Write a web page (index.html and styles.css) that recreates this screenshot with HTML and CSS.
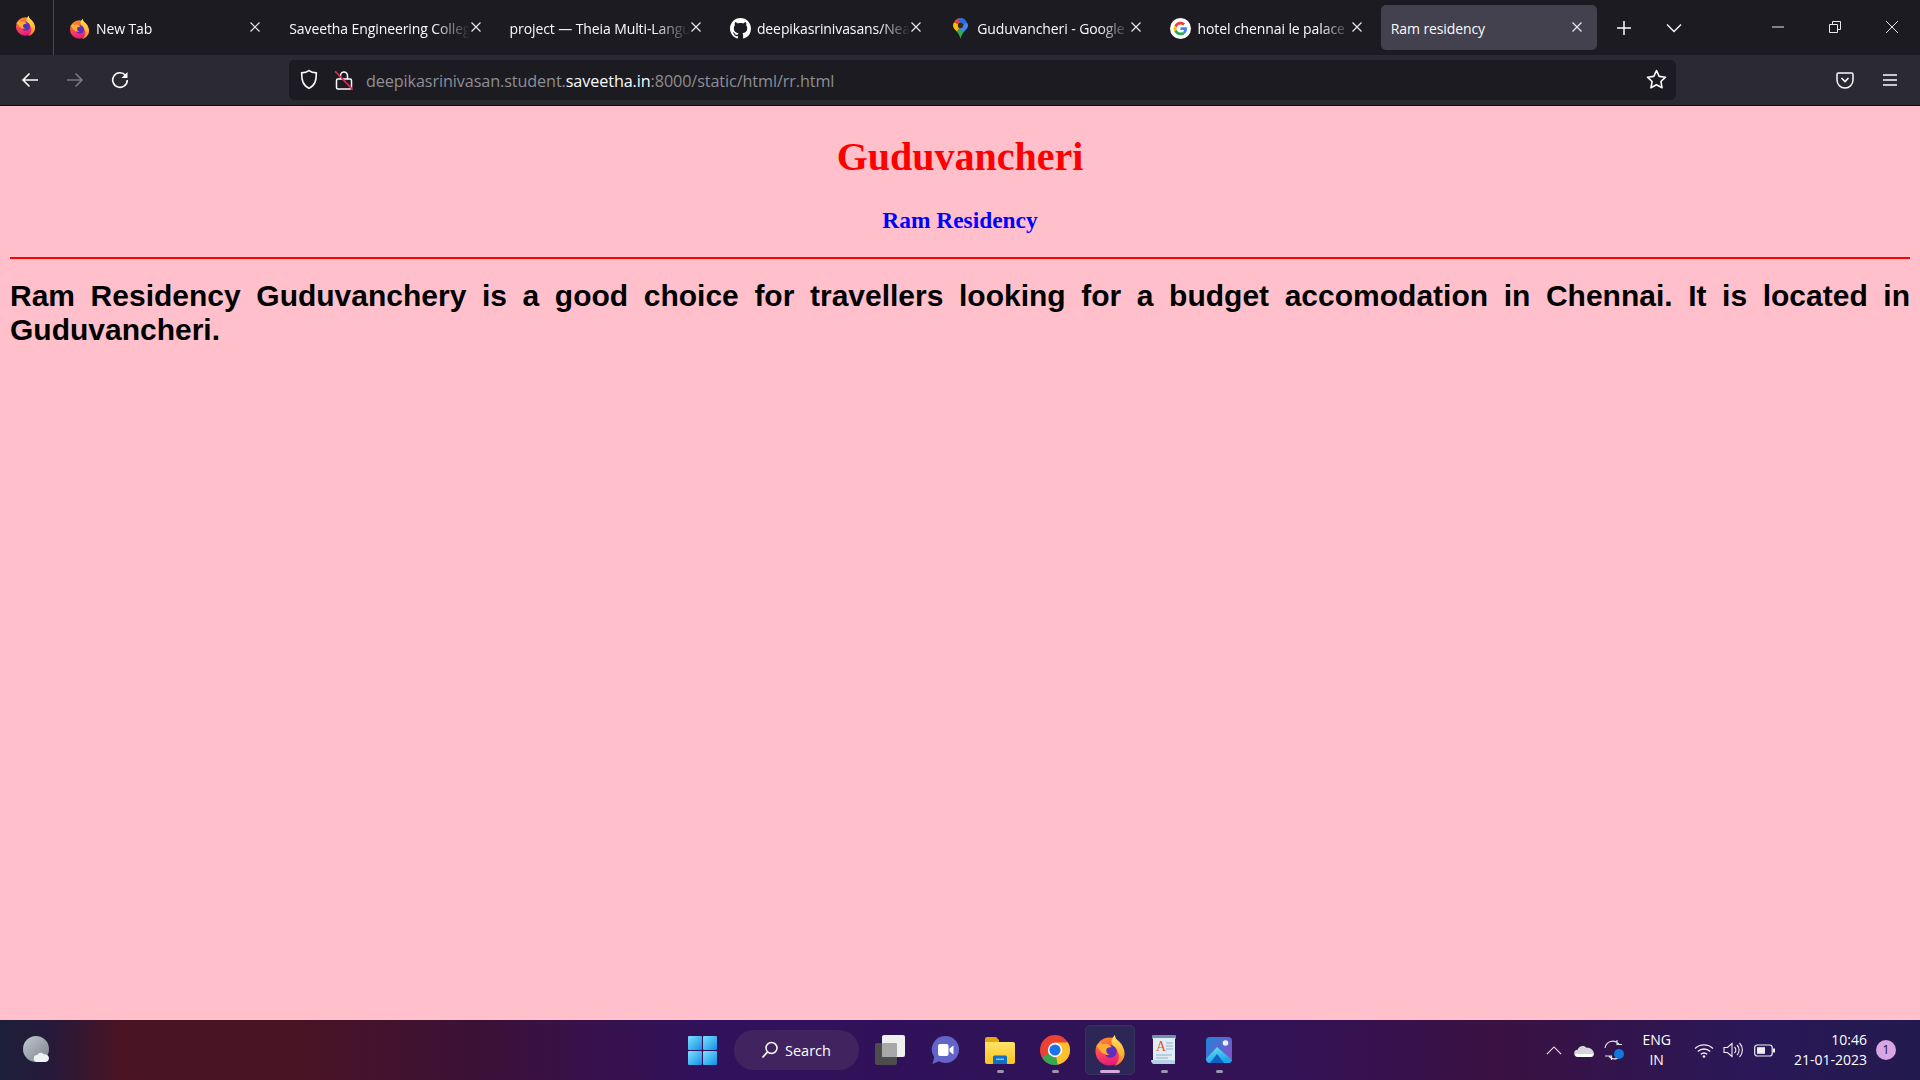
FILE: index.html
```html
<!DOCTYPE html>
<html lang="en">
<head>
<meta charset="utf-8">
<title>Ram residency</title>
<link rel="stylesheet" href="styles.css">
</head>
<body>
<svg class="defs" width="0" height="0" aria-hidden="true">
  <defs>
    <linearGradient id="fxBody" x1="0.3" y1="0" x2="0.5" y2="1">
      <stop offset="0" stop-color="#ff8a2b"/><stop offset="0.5" stop-color="#ff4a55"/><stop offset="1" stop-color="#e4177f"/>
    </linearGradient>
    <linearGradient id="fxFlame" x1="0" y1="0" x2="0" y2="1">
      <stop offset="0" stop-color="#ffe95c"/><stop offset="0.6" stop-color="#ffb52e"/><stop offset="1" stop-color="#ff6a2e"/>
    </linearGradient>
    <linearGradient id="winTile" x1="0" y1="0" x2="1" y2="1">
      <stop offset="0" stop-color="#7fe0ff"/><stop offset="1" stop-color="#0f8fe6"/>
    </linearGradient>
    <linearGradient id="folder" x1="0" y1="0" x2="0" y2="1">
      <stop offset="0" stop-color="#ffe36a"/><stop offset="1" stop-color="#fcc21c"/>
    </linearGradient>
    <linearGradient id="photo" x1="0" y1="0" x2="1" y2="0.6">
      <stop offset="0" stop-color="#1f86d8"/><stop offset="1" stop-color="#7a55c8"/>
    </linearGradient>
    <linearGradient id="peak" x1="0" y1="0" x2="0.4" y2="1">
      <stop offset="0" stop-color="#6fe0f5"/><stop offset="1" stop-color="#1aa6e8"/>
    </linearGradient>
    <linearGradient id="weather" x1="0" y1="0" x2="1" y2="1">
      <stop offset="0" stop-color="#c3c9cf"/><stop offset="1" stop-color="#77828c"/>
    </linearGradient>
    <symbol id="firefox" viewBox="0 0 32 32">
      <circle cx="15.500" cy="17.500" r="14" fill="url(#fxBody)"/>
      <path fill="url(#fxFlame)" d="M21 1c0 4 3 5.500 6 9 3 4 4.200 8 3.300 12-1 5-5.300 9-10.300 9.800 4-3 6-8 4.200-13C23 14.500 18.300 12 17.500 8.500 17 5.500 19 3 21 1z"/>
      <circle cx="16.500" cy="17.500" r="6.300" fill="#5a2fc2"/>
      <path fill="#ffae34" d="M1.800 13.500C3.200 10.500 5.500 8.500 8 8.300c-.6.700-.9 1.500-.8 2.300 2.800-1.300 6-1.100 8.300.5 1 .7 1.800 1.600 2 2.400-2.500-.6-4.800.6-5.200 2.500-.4 2.200 1.200 4.200 3.500 5-4 .5-8-1.500-10-4.800C4.500 14.800 3.800 13.600 3.600 12.400c-.7.300-1.300.7-1.800 1.100z"/>
    </symbol>
    <symbol id="github" viewBox="0 0 16 16">
      <path fill="#fff" d="M8 0C3.580 0 0 3.580 0 8c0 3.540 2.290 6.530 5.470 7.590.4.070.55-.17.55-.38 0-.19-.01-.82-.01-1.490-2.010.37-2.530-.49-2.690-.94-.09-.23-.48-.94-.82-1.130-.28-.15-.68-.52-.01-.53.63-.01 1.080.58 1.230.82.720 1.210 1.870.87 2.330.66.070-.52.280-.87.510-1.070-1.780-.2-3.640-.89-3.640-3.950 0-.87.310-1.590.820-2.150-.08-.2-.36-1.020.080-2.120 0 0 .67-.21 2.200.82.640-.18 1.320-.27 2-.27.680 0 1.360.090 2 .27 1.530-1.040 2.200-.82 2.200-.82.440 1.100.160 1.920.080 2.120.510.560.820 1.270.820 2.150 0 3.070-1.870 3.750-3.650 3.950.29.250.54.730.54 1.480 0 1.070-.01 1.930-.01 2.200 0 .21.150.46.550.38A8.013 8.013 0 0016 8c0-4.420-3.580-8-8-8z"/>
    </symbol>
    <symbol id="maps" viewBox="0 0 20 28">
      <path fill="#34a853" d="M5 18c2 3 4 5 5 10 1-5 3-7 5-10l-5-6z"/>
      <path fill="#fbbc04" d="M1.500 5.500C.6 6.800 0 8.300 0 10c0 3.200 2.500 5.500 5 8l7-8z"/>
      <path fill="#ea4335" d="M10 0C6.500 0 3.300 2 1.500 5.500L10 10l8-3.500C16.800 2.500 13.500 0 10 0z"/>
      <path fill="#4285f4" d="M18.200 5.600 7 14l8 4c2.500-2.500 5-4.800 5-8 0-1.600-.7-3.100-1.800-4.400z"/>
      <path fill="#1a73e8" d="M10 0c3.600 0 6.700 2.300 8.200 5.600L12 9 7 3z"/>
      <circle cx="10" cy="10" r="3.600" fill="#3a2a18"/>
    </symbol>
    <symbol id="google" viewBox="0 0 48 48">
      <circle cx="24" cy="24" r="24" fill="#fff"/>
      <g transform="translate(8.500 8.500) scale(.645)">
        <path fill="#ea4335" d="M24 9.500c3.500 0 6.700 1.200 9.200 3.600l6.900-6.900C35.900 2.400 30.500 0 24 0 14.600 0 6.500 5.400 2.600 13.200l8 6.200C12.400 13.700 17.700 9.500 24 9.500z"/>
        <path fill="#4285f4" d="M46.900 24.500c0-1.600-.1-3.100-.4-4.500H24v9h12.900c-.6 3-2.200 5.500-4.700 7.200l7.700 6c4.500-4.200 7-10.300 7-17.700z"/>
        <path fill="#fbbc05" d="M10.500 28.600A14.500 14.500 0 0 1 10.500 19.400l-8-6.200A24 24 0 0 0 2.600 34.800z"/>
        <path fill="#34a853" d="M24 48c6.500 0 11.900-2.100 15.900-5.800l-7.700-6c-2.200 1.400-4.900 2.300-8.200 2.300-6.300 0-11.600-4.200-13.500-9.900l-8 6.200C6.500 42.600 14.600 48 24 48z"/>
      </g>
    </symbol>
    <symbol id="close" viewBox="0 0 12 12">
      <path d="M1.500 1.500l9 9M10.500 1.500l-9 9" fill="none" stroke="currentColor" stroke-width="1.200"/>
    </symbol>
  </defs>
</svg>

<div class="browser">
  <div class="tabbar">
    <div class="fx-menu"><svg class="fav"><use href="#firefox"/></svg></div>
    <div class="tabs">
      <div class="tab"><svg class="fav"><use href="#firefox"/></svg><span class="title">New Tab</span><svg class="x"><use href="#close"/></svg></div>
      <div class="tab"><span class="title">Saveetha Engineering College</span><svg class="x"><use href="#close"/></svg></div>
      <div class="tab"><span class="title">project — Theia Multi-Language</span><svg class="x"><use href="#close"/></svg></div>
      <div class="tab"><svg class="fav"><use href="#github"/></svg><span class="title">deepikasrinivasans/NearBy</span><svg class="x"><use href="#close"/></svg></div>
      <div class="tab"><svg class="fav"><use href="#maps"/></svg><span class="title">Guduvancheri - Google Maps</span><svg class="x"><use href="#close"/></svg></div>
      <div class="tab"><svg class="fav"><use href="#google"/></svg><span class="title">hotel chennai le palace</span><svg class="x"><use href="#close"/></svg></div>
      <div class="tab active"><span class="title plain">Ram residency</span><svg class="x"><use href="#close"/></svg></div>
    </div>
    <svg class="tb-ico plus" viewBox="0 0 16 16"><path d="M8 1v14M1 8h14" stroke="#fbfbfe" stroke-width="1.500" fill="none"/></svg>
    <svg class="tb-ico chev" viewBox="0 0 16 16"><path d="M1 4.500l7 7 7-7" stroke="#fbfbfe" stroke-width="1.300" fill="none"/></svg>
    <div class="win">
      <svg class="win-ico" viewBox="0 0 14 14"><path d="M1 7h12" stroke="#e8e8ea" stroke-width="1"/></svg>
      <svg class="win-ico" viewBox="0 0 14 14"><path d="M1.500 4.500h8v8h-8zM4.500 4.500v-3h8v8h-3" stroke="#e8e8ea" stroke-width="1" fill="none"/></svg>
      <svg class="win-ico" viewBox="0 0 14 14"><path d="M1 1l12 12M13 1L1 13" stroke="#e8e8ea" stroke-width="1" fill="none"/></svg>
    </div>
  </div>

  <div class="toolbar">
    <div class="nav">
      <svg class="nav-ico" viewBox="0 0 18 18"><path d="M17 9H2M8.500 2.500L2 9l6.500 6.500" fill="none" stroke="#fbfbfe" stroke-width="1.600"/></svg>
      <svg class="nav-ico" viewBox="0 0 18 18"><path d="M1 9h15M9.500 2.500L16 9l-6.500 6.500" fill="none" stroke="#7a7a80" stroke-width="1.600"/></svg>
      <svg class="nav-ico" viewBox="0 0 18 18"><path d="M14.500 4.200A7.300 7.300 0 1 0 16.300 9" fill="none" stroke="#fbfbfe" stroke-width="1.600"/><path d="M16.500 1v6h-6z" fill="#fbfbfe"/></svg>
    </div>
    <div class="urlbar">
      <svg class="shield" viewBox="0 0 18 20"><path d="M9 1.500c2 1.400 4.500 2 7 2.200 0 7-1 11.600-7 14.800C3 15.300 2 10.700 2 3.700c2.500-.2 5-.8 7-2.200z" fill="none" stroke="#fbfbfe" stroke-width="1.500"/></svg>
      <svg class="lock" viewBox="0 0 18 19"><path d="M5.500 8V4.500a3.500 3.500 0 0 1 7 0V8" fill="none" stroke="#fbfbfe" stroke-width="1.500"/><rect x="1.500" y="8" width="15" height="10" rx="1.500" fill="none" stroke="#fbfbfe" stroke-width="1.500"/><path d="M0 0L18 19" stroke="#e22850" stroke-width="1.600"/></svg>
      <span class="url">deepikasrinivasan.student.<b>saveetha.in</b>:8000/static/html/rr.html</span>
      <svg class="star" viewBox="0 0 20 20"><path d="M10 1.500l2.600 5.500 6 .8-4.400 4.100 1.100 6L10 15l-5.300 2.900 1.100-6L1.400 7.800l6-.8z" fill="none" stroke="#fbfbfe" stroke-width="1.500" stroke-linejoin="round"/></svg>
    </div>
    <div class="tool-right">
      <svg class="tool-ico" viewBox="0 0 18 18"><path d="M2.500 2h13A1.500 1.500 0 0 1 17 3.500V9A8 8 0 0 1 1 9V3.500A1.500 1.500 0 0 1 2.500 2z" fill="none" stroke="#fbfbfe" stroke-width="1.500"/><path d="M5.500 7l3.500 3.500L12.500 7" fill="none" stroke="#fbfbfe" stroke-width="1.600"/></svg>
      <svg class="tool-ico" viewBox="0 0 18 18"><path d="M2 4h14M2 9h14M2 14h14" stroke="#fbfbfe" stroke-width="1.500"/></svg>
    </div>
  </div>
</div>

<main class="page">
  <h1 class="city">Guduvancheri</h1>
  <h2 class="hotel">Ram Residency</h2>
  <hr class="rule">
  <p class="desc">Ram Residency Guduvanchery is a good choice for travellers looking for a budget accomodation in Chennai. It is located in Guduvancheri.</p>
</main>

<footer class="taskbar">
  <div class="task-left">
    <svg class="weather" viewBox="0 0 30 28"><circle cx="13" cy="13" r="13" fill="url(#weather)"/><path d="M14 26a3.500 3.500 0 0 1 .4-7c.6-2.600 4.800-3.300 6.200-.8 2.500-.4 5.400 1 5.400 4 0 2.400-1.900 3.800-4 3.800z" fill="#f0f1f3"/></svg>
  </div>
  <div class="task-center">
    <svg class="start" viewBox="0 0 29 29"><rect width="14" height="14" rx="1" fill="url(#winTile)"/><rect x="15" width="14" height="14" rx="1" fill="url(#winTile)"/><rect y="15" width="14" height="14" rx="1" fill="url(#winTile)"/><rect x="15" y="15" width="14" height="14" rx="1" fill="url(#winTile)"/></svg>
    <div class="search">
      <svg class="search-ico" viewBox="0 0 18 18"><circle cx="10.500" cy="7" r="5.500" fill="none" stroke="#fff" stroke-width="1.500"/><path d="M6.500 11L1.500 16.500" stroke="#fff" stroke-width="1.800"/></svg>
      <span>Search</span>
    </div>
    <div class="app">
      <svg viewBox="0 0 30 30"><rect y="8" width="22" height="22" rx="2" fill="#4d4d4d"/><rect x="7" width="23" height="22" rx="2" fill="#efefef"/><rect x="7" y="8" width="15" height="14" rx="1" fill="#a8a8a8"/></svg>
    </div>
    <div class="app">
      <svg viewBox="0 0 30 30"><path d="M15.500 1a13.500 13.500 0 1 1-6.500 25.300L2.500 29l1.700-6.800A13.500 13.500 0 0 1 15.500 1z" fill="#6264c7"/><rect x="8" y="9" width="10.500" height="12" rx="2" fill="#fff"/><path d="M19.500 13.500l4-3v9l-4-3z" fill="#fff"/></svg>
    </div>
    <div class="app on">
      <svg viewBox="0 0 30 30"><path d="M0 4a2 2 0 0 1 2-2h9l3 3h0v3H0z" fill="#e8a80c"/><path d="M0 7h28a2 2 0 0 1 2 2v18a2 2 0 0 1-2 2H2a2 2 0 0 1-2-2z" fill="url(#folder)"/><path d="M8 22a1.500 1.500 0 0 1 1.500-1.500h11A1.500 1.500 0 0 1 22 22v7H8z" fill="#0f6fc0"/><rect x="11" y="23.500" width="8" height="1.500" fill="#7cc7f2"/></svg>
      <i class="dot"></i>
    </div>
    <div class="app on">
      <svg viewBox="0 0 30 30"><circle cx="15" cy="15" r="15" fill="#ea4335"/><path d="M15 15L2.010 22.500A15 15 0 0 0 15 30c.9 0 1.800-.08 2.700-.24z" fill="#34a853"/><path d="M15 15l2.700 14.760A15 15 0 0 0 28 7.500H15z" fill="#fbc02d"/><circle cx="15" cy="15" r="7.200" fill="#fff"/><circle cx="15" cy="15" r="5.600" fill="#1a73e8"/></svg>
      <i class="dot"></i>
    </div>
    <div class="app active on">
      <svg viewBox="0 0 32 32"><use href="#firefox"/></svg>
      <i class="dot long"></i>
    </div>
    <div class="app on">
      <svg class="narrow" viewBox="0 0 26 30"><rect x="1" width="24" height="4" rx="1" fill="#6f93ad"/><path d="M2 3h22v22c0 2-1 3-3 3H2z" fill="#e0edf6"/><path d="M0 25h22c1 0 2 1 2 3v1H3c-2 0-3-2-3-4z" fill="#b7d2e6"/><text class="a-mark" x="5" y="16">A</text><path d="M15 8h7M15 11h7M15 14h7M5 20h16M5 23h12" stroke="#8fb2cd" stroke-width="1"/></svg>
      <i class="dot"></i>
    </div>
    <div class="app on">
      <svg class="narrow" viewBox="0 0 26 30"><rect y="2" width="26" height="26" rx="4" fill="url(#photo)"/><circle cx="19.500" cy="8" r="2.800" fill="#e8f2ff"/><path d="M0 24L11 12l15 13c-.4 1.800-1.600 3-3.500 3H4c-2 0-3.500-1.500-4-4z" fill="url(#peak)"/><path d="M11 19l7 9H4z" fill="#0f62c4"/></svg>
      <i class="dot"></i>
    </div>
  </div>
  <div class="task-right">
    <svg class="tray-chev" viewBox="0 0 18 10"><path d="M1 9l8-8 8 8" fill="none" stroke="#e6e6e6" stroke-width="1.300"/></svg>
    <svg class="tray-cloud" viewBox="0 0 20 13"><path d="M4 13a3.600 3.600 0 0 1-.4-7.200C4.500 2 10 .5 12.500 3.800 16 3 19.500 6 20 9.500c.2 2-1 3.500-3 3.500z" fill="#d4d6da"/><path d="M1 10h18c0 2-1 3-3 3H4c-1.500 0-2.500-1-3-3z" fill="#fff"/></svg>
    <svg class="tray-sync" viewBox="0 0 22 22"><path d="M2 9a8 8 0 0 1 14-4M14 1v4.500h5M19.500 13A8 8 0 0 1 6 17.500M8.500 21v-4H2" fill="none" stroke="#e6e6e6" stroke-width="1.100"/><circle cx="16" cy="15" r="5" fill="#0f78e0"/></svg>
    <div class="lang"><span>ENG</span><span>IN</span></div>
    <svg class="tray-wifi" viewBox="0 0 20 15"><path d="M1 5.500a13 13 0 0 1 18 0M3.800 8.500a9 9 0 0 1 12.400 0M6.800 11.300a5 5 0 0 1 6.400 0" fill="none" stroke="#f0f0f0" stroke-width="1.300"/><circle cx="10" cy="13.500" r="1.300" fill="#f0f0f0"/></svg>
    <svg class="tray-vol" viewBox="0 0 21 16"><path d="M1 5.500h3.500L9 1.500v13l-4.500-4H1z" fill="none" stroke="#f0f0f0" stroke-width="1.100"/><path d="M11.500 5a4 4 0 0 1 0 6M14 3a7 7 0 0 1 0 10M16.500 1a10 10 0 0 1 0 14" fill="none" stroke="#f0f0f0" stroke-width="1.100"/></svg>
    <svg class="tray-bat" viewBox="0 0 21 13"><rect x=".7" y="1" width="17.500" height="11" rx="2.500" fill="none" stroke="#f0f0f0" stroke-width="1.200"/><rect x="3" y="3.200" width="8" height="6.600" fill="#f0f0f0"/><rect x="19" y="4.500" width="2" height="4" fill="#f0f0f0"/></svg>
    <div class="clock"><span>10:46</span><span>21-01-2023</span></div>
    <div class="badge">1</div>
  </div>
</footer>
</body>
</html>
```

FILE: styles.css
```css
* { box-sizing: border-box; }
html, body { height: 100%; }
body {
  margin: 0;
  display: flex;
  flex-direction: column;
  height: 100vh;
  overflow: hidden;
  background: #ffc0cb;
  font-family: "Open Sans", "Noto Sans", sans-serif;
}
.defs { position: absolute; }

/* browser chrome */
.browser { flex: none; background: #1c1b22; }
.tabbar {
  height: 55px;
  display: flex;
  align-items: center;
  background: #1c1b22;
}
.fx-menu {
  width: 54px;
  height: 55px;
  flex: none;
  display: flex;
  align-items: center;
  justify-content: center;
  border-right: 1px solid #4a4a50;
}
.fx-menu .fav { margin: 0 0 5px -3px; }
.fav { width: 21px; height: 21px; flex: none; }
.tabs { display: flex; flex: none; margin-left: 3px; }
.tab {
  width: 220.3px;
  height: 45px;
  padding: 2px 16px 0 12px;
  display: flex;
  align-items: center;
  gap: 7px;
  border-left: 2px solid #1c1b22;
  border-right: 2px solid #1c1b22;
  color: #fbfbfe;
  font-size: 14px;
  letter-spacing: -0.1px;
}
.tab .fav { margin-left: -2px; }
.title {
  flex: 1;
  min-width: 0;
  white-space: nowrap;
  overflow: hidden;
  margin-right: -7px;
  -webkit-mask-image: linear-gradient(to right, #000 80%, transparent);
  mask-image: linear-gradient(to right, #000 80%, transparent);
}
.tab .title { margin-left: -1px; }
.tab .title:first-child { margin-left: -2px; }
.x { width: 12px; height: 12px; flex: none; color: #e8e8ea; margin: 0 -2px 3px 0; }
.tab.active {
  background: #42414d;
  border-radius: 5px;
  width: 216px;
  margin: 0 2px;
  border: 0;
  padding: 2px 16px 0 12px;
}
.tab.active .title { -webkit-mask-image: none; mask-image: none; }
.tb-ico { flex: none; }
.plus { width: 16px; height: 16px; margin-left: 17px; }
.chev { width: 16px; height: 16px; margin-left: 34px; }
.win { margin-left: auto; display: flex; gap: 43px; padding-right: 21px; margin-bottom: 2px; }
.win-ico { width: 14px; height: 14px; }

.toolbar {
  height: 51px;
  background: #2b2a33;
  border-bottom: 1px solid #0c0c0d;
  display: flex;
  align-items: center;
  padding-bottom: 1px;
}
.nav { width: 289px; flex: none; display: flex; gap: 27px; padding-left: 21px; }
.nav-ico { width: 18px; height: 18px; }
.urlbar {
  width: 1387px;
  height: 40px;
  flex: none;
  background: #1c1b22;
  border-radius: 5px;
  display: flex;
  align-items: center;
  padding: 0 9px 0 10px;
}
.shield { width: 20px; height: 21px; flex: none; }
.lock { width: 18px; height: 19px; flex: none; margin: 2px 0 0 16px; }
.url {
  margin: 2px 0 0 13px;
  flex: 1;
  font-size: 16.200px;
  color: #8e8e93;
  letter-spacing: -0.100px;
}
.url b { font-weight: 400; color: #fbfbfe; }
.star { width: 21px; height: 21px; flex: none; }
.tool-right { flex: 1; display: flex; justify-content: flex-end; gap: 27px; padding-right: 21px; }
.tool-ico { width: 18px; height: 18px; }

/* page */
.page {
  flex: 1;
  min-height: 0;
  background: #ffc0cb;
  padding: 0 10px;
  display: flow-root;
  color: #000;
}
.city {
  margin: 27px 0;
  font: bold 40px "Liberation Serif", serif;
  color: #f00;
  text-align: center;
}
.hotel {
  margin: 0;
  font: bold 23.400px/27px "Liberation Serif", serif;
  color: #00f;
  text-align: center;
}
.rule {
  margin: 23px 0 0;
  height: 2px;
  border: 0;
  background: #f00;
}
.desc {
  margin: 20px 0 0;
  font: bold 30px/34px "Liberation Sans", sans-serif;
  text-align: justify;
}

/* taskbar */
.taskbar {
  flex: none;
  height: 60px;
  display: grid;
  grid-template-columns: 1fr auto 1fr;
  align-items: center;
  color: #fff;
  background: linear-gradient(90deg, #1c2038 0, #26193a 50px, #4a1424 120px, #491424 300px, #3c1138 480px, #32115c 700px, #2f1258 1000px, #341255 1300px, #3a1142 1500px, #2a1858 1750px, #221a4e 1920px);
}
.task-left { padding-left: 23px; display: flex; }
.weather { width: 30px; height: 28px; }
.task-center { display: flex; align-items: center; padding-left: 14px; }
.start { width: 29px; height: 29px; margin-right: 17px; }
.search {
  width: 125px;
  height: 40px;
  border-radius: 20px;
  background: #41235f;
  display: flex;
  align-items: center;
  justify-content: center;
  gap: 6px;
  margin-right: 4px;
  font-size: 14.500px;
}
.search-ico { width: 18px; height: 18px; }
.app {
  position: relative;
  width: 55px;
  height: 50px;
  display: flex;
  align-items: center;
  justify-content: center;
  border: 1px solid transparent;
  border-radius: 5px;
}
.app > svg { width: 30px; height: 30px; }
.app > svg.narrow { width: 26px; height: 30px; }
.app.active { width: 50px; margin: 0 2px; background: #2d2758; border-color: #38325f; }
.app.active > svg { width: 32px; height: 32px; }
.dot {
  position: absolute;
  left: 50%;
  bottom: 1px;
  width: 7px;
  height: 3px;
  margin-left: -3.500px;
  border-radius: 2px;
  background: #9a97a8;
}
.dot.long { width: 20px; margin-left: -10px; background: #dba6e2; }
.a-mark { font: 14px "Liberation Serif", serif; fill: #e25a1c; }
.task-right {
  display: flex;
  align-items: center;
  justify-content: flex-end;
  padding-right: 24px;
}
.tray-chev { width: 16px; height: 9px; margin-right: 12px; }
.tray-cloud { width: 20px; height: 13px; margin-right: 9px; }
.tray-sync { width: 22px; height: 22px; margin-right: 17px; }
.lang {
  display: flex;
  flex-direction: column;
  align-items: center;
  font-size: 14px;
  line-height: 20px;
  margin-right: 23px;
}
.tray-wifi { width: 20px; height: 15px; margin-right: 9px; }
.tray-vol { width: 21px; height: 16px; margin-right: 10px; }
.tray-bat { width: 21px; height: 13px; margin-right: 19px; }
.clock {
  display: flex;
  flex-direction: column;
  align-items: flex-end;
  font-size: 14px;
  line-height: 20px;
  margin-right: 9px;
}
.badge {
  width: 20px;
  height: 20px;
  border-radius: 50%;
  background: #d9a6e4;
  color: #1a1020;
  font-size: 12px;
  line-height: 20px;
  text-align: center;
}
```
